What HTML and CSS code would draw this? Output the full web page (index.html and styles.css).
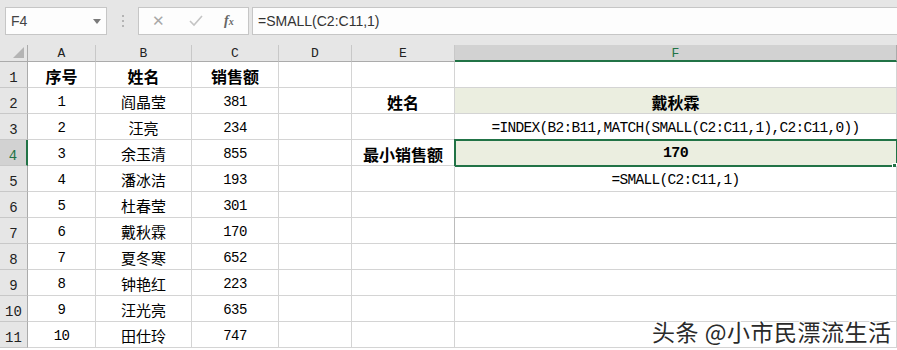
FILE: index.html
```html
<!DOCTYPE html>
<html lang="zh">
<head>
  <meta charset="UTF-8">
  <title>SMALL + INDEX</title>
  <link rel="stylesheet" href="styles.css">
</head>
<body>
  <div class="toolbar">
    <div class="namebox">
      <span>F4</span>
      <span class="arrow"></span>
    </div>
    <div class="dots"><i></i><i></i><i></i></div>
    <div class="btns">
      <span class="x">&#x2715;</span>
      <svg class="check" width="16" height="14" viewBox="0 0 16 14"><path d="M2 7 L6 11 L14 2" fill="none" stroke="#c4c4c4" stroke-width="1.6"/></svg>
      <span class="fx">f<sub>x</sub></span>
    </div>
    <div class="formula">=SMALL(C2:C11,1)</div>
  </div>

  <div class="sheet">
    <div class="corner"><span class="tri"></span></div>
    <div class="colh">A</div>
    <div class="colh">B</div>
    <div class="colh">C</div>
    <div class="colh">D</div>
    <div class="colh">E</div>
    <div class="colh sel">F</div>

    <div class="rowh">1</div>
    <div class="c b">序号</div><div class="c b">姓名</div><div class="c b">销售额</div><div class="c"></div><div class="c"></div><div class="c"></div>

    <div class="rowh">2</div>
    <div class="c n">1</div><div class="c">阎晶莹</div><div class="c n">381</div><div class="c"></div><div class="c b">姓名</div><div class="c b fill">戴秋霖</div>

    <div class="rowh">3</div>
    <div class="c n">2</div><div class="c">汪亮</div><div class="c n">234</div><div class="c"></div><div class="c"></div><div class="c f">=INDEX(B2:B11,MATCH(SMALL(C2:C11,1),C2:C11,0))</div>

    <div class="rowh sel">4</div>
    <div class="c n">3</div><div class="c">余玉清</div><div class="c n">855</div><div class="c"></div><div class="c b">最小销售额</div><div class="c b n fill active">170<span class="handle"></span></div>

    <div class="rowh">5</div>
    <div class="c n">4</div><div class="c">潘冰洁</div><div class="c n">193</div><div class="c"></div><div class="c"></div><div class="c f">=SMALL(C2:C11,1)</div>

    <div class="rowh">6</div>
    <div class="c n">5</div><div class="c">杜春莹</div><div class="c n">301</div><div class="c"></div><div class="c"></div><div class="c"></div>

    <div class="rowh">7</div>
    <div class="c n">6</div><div class="c">戴秋霖</div><div class="c n">170</div><div class="c"></div><div class="c"></div><div class="c ghost"></div>

    <div class="rowh">8</div>
    <div class="c n">7</div><div class="c">夏冬寒</div><div class="c n">652</div><div class="c"></div><div class="c"></div><div class="c"></div>

    <div class="rowh">9</div>
    <div class="c n">8</div><div class="c">钟艳红</div><div class="c n">223</div><div class="c"></div><div class="c"></div><div class="c"></div>

    <div class="rowh">10</div>
    <div class="c n">9</div><div class="c">汪光亮</div><div class="c n">635</div><div class="c"></div><div class="c"></div><div class="c"></div>

    <div class="rowh">11</div>
    <div class="c n">10</div><div class="c">田仕玲</div><div class="c n">747</div><div class="c"></div><div class="c"></div><div class="c"></div>
  </div>

  <div class="watermark">头条 @小市民漂流生活</div>
</body>
</html>
```

FILE: styles.css
```css
* { margin: 0; padding: 0; box-sizing: border-box; }
body {
  width: 897px;
  height: 350px;
  overflow: hidden;
  background: #fff;
  font-family: "Noto Sans CJK SC", sans-serif;
  color: #000;
  position: relative;
}

/* formula bar */
.toolbar {
  height: 45px;
  background: #e6e6e6;
  display: flex;
  align-items: flex-start;
  padding: 7px 0 0 5px;
}
.namebox {
  width: 102px;
  height: 28px;
  background: #fdfdfd;
  border: 1px solid #c6c6c6;
  display: flex;
  align-items: center;
  justify-content: space-between;
  padding: 0 5px 0 5px;
  font-family: "Liberation Sans", sans-serif;
  font-size: 14px;
  color: #444;
}
.arrow {
  width: 0;
  height: 0;
  border-left: 4px solid transparent;
  border-right: 4px solid transparent;
  border-top: 5px solid #7a7a7a;
}
.dots {
  width: 31px;
  height: 28px;
  display: flex;
  flex-direction: column;
  align-items: center;
  justify-content: center;
  gap: 3px;
}
.dots i {
  width: 2px;
  height: 2px;
  background: #b4b4b4;
}
.btns {
  width: 111px;
  height: 28px;
  background: #fdfdfd;
  border: 1px solid #c6c6c6;
  display: flex;
  align-items: center;
  padding-left: 13px;
}
.x {
  color: #a8a8a8;
  font-size: 15px;
  font-family: "DejaVu Sans", sans-serif;
  width: 36px;
}
.check { margin-right: 20px; }
.fx {
  font-family: "Liberation Serif", serif;
  font-style: italic;
  font-weight: bold;
  font-size: 14px;
  color: #666;
}
.fx sub { font-size: 10px; vertical-align: 0; }
.formula {
  flex: 1;
  height: 28px;
  margin-left: 3px;
  background: #fdfdfd;
  border: 1px solid #c6c6c6;
  border-right: none;
  font-family: "Liberation Sans", sans-serif;
  font-size: 14px;
  color: #333;
  line-height: 26px;
  padding-left: 5px;
}

/* grid */
.sheet {
  display: grid;
  grid-template-columns: 28px 68px 96px 87px 73px 103px 442px;
  grid-template-rows: 17px repeat(11, 26px);
}
.corner {
  background: #e6e6e6;
  border-right: 1px solid #ababab;
  border-bottom: 1px solid #ababab;
  position: relative;
}
.tri {
  position: absolute;
  right: 3px;
  bottom: 3px;
  width: 0;
  height: 0;
  border-left: 11px solid transparent;
  border-bottom: 11px solid #b4b4b4;
}
.colh {
  background: #e6e6e6;
  border-right: 1px solid #c8c8c8;
  border-bottom: 1px solid #ababab;
  font-family: "Liberation Mono", monospace;
  font-size: 13px;
  color: #222;
  text-align: center;
  line-height: 17px;
}
.colh.sel {
  background: #d2d2d2;
  color: #217346;
  border-bottom: 2px solid #217346;
  border-right: 1px solid #ababab;
}
.rowh {
  background: #e6e6e6;
  border-right: 1px solid #ababab;
  border-bottom: 1px solid #c8c8c8;
  font-family: "Liberation Mono", monospace;
  font-size: 14px;
  color: #222;
  display: flex;
  align-items: flex-end;
  justify-content: center;
  padding-bottom: 1px;
}
.rowh.sel {
  background: #d2d2d2;
  color: #217346;
  border-right: 2px solid #217346;
}
.c {
  border-right: 1px solid #d4d4d4;
  border-bottom: 1px solid #d4d4d4;
  display: flex;
  align-items: center;
  justify-content: center;
  padding-top: 2px;
  font-size: 15px;
  white-space: nowrap;
  position: relative;
}
.c.b { font-weight: bold; font-size: 16px; }
.c.n {
  font-family: "Liberation Mono", monospace;
  font-size: 14px;
  letter-spacing: -0.6px;
}
.c.b.n { font-family: "Liberation Mono", monospace; font-size: 15px; letter-spacing: -0.6px; }
.c.f {
  font-family: "Liberation Mono", monospace;
  font-size: 14.5px;
  letter-spacing: -0.7px;
}
.fill { background: #ebeee0; }
.active {
  outline: 2px solid #217346;
  outline-offset: -1px;
}
.handle {
  position: absolute;
  right: -1px;
  bottom: -3px;
  width: 5px;
  height: 5px;
  background: #217346;
  border: 1px solid #fff;
}
.ghost {
  border-top: 1px solid #bcbcbc;
  border-left: 1px solid #bcbcbc;
  border-bottom: 1px solid #bcbcbc;
  margin-top: -1px;
  margin-left: -1px;
}

.watermark {
  position: absolute;
  left: 652px;
  top: 314px;
  font-size: 23px;
  color: #2a2a2a;
  letter-spacing: 0.5px;
  text-shadow: 1px 1px 0 #fff, -1px -1px 0 #fff, 1px -1px 0 #fff, -1px 1px 0 #fff;
}
```
